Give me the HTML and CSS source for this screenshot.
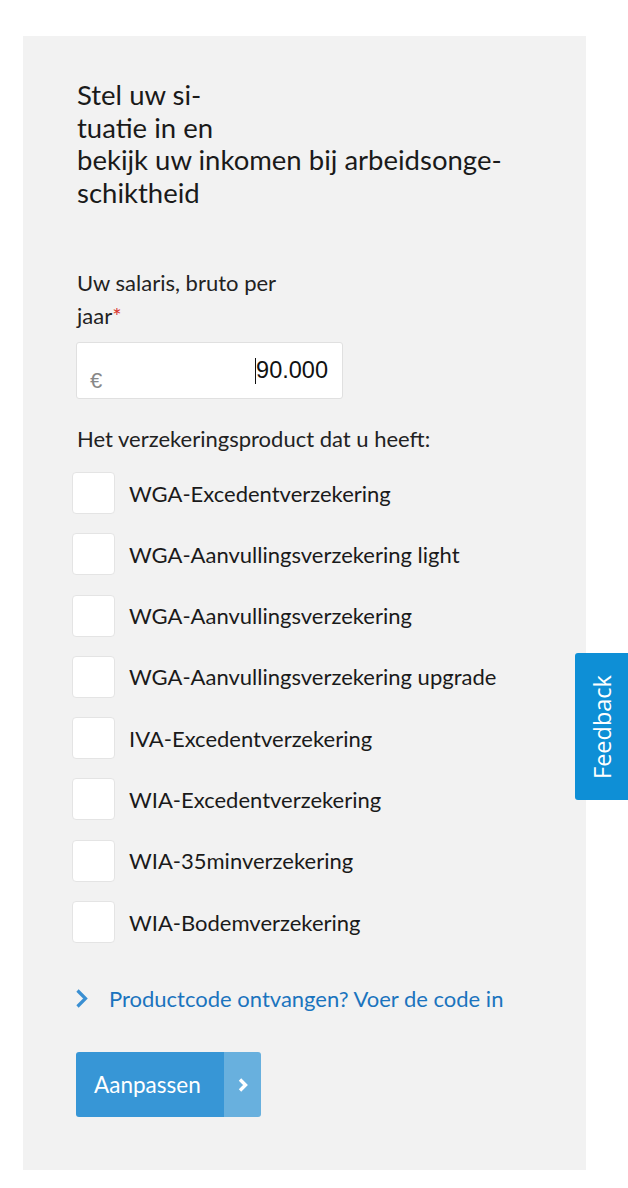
FILE: index.html
```html
<!DOCTYPE html>
<html lang="nl">
<head>
<meta charset="utf-8">
<title>Inkomen bij arbeidsongeschiktheid</title>
<link rel="stylesheet" href="styles.css">
</head>
<body>
<div class="panel">
  <h2 class="title">Stel uw si-<br>tuatie in en<br>bekijk uw inkomen bij arbeidsonge-<br>schiktheid</h2>

  <label class="label">Uw salaris, bruto per<br>jaar<span class="req">*</span></label>
  <div class="input">
    <span class="cur">€</span>
    <span class="val"><span class="caret"></span>90.000</span>
  </div>

  <p class="label prod">Het verzekeringsproduct dat u heeft:</p>
  <ul class="checks">
    <li class="check"><span class="box"></span><span>WGA-Excedentverzekering</span></li>
    <li class="check"><span class="box"></span><span>WGA-Aanvullingsverzekering light</span></li>
    <li class="check"><span class="box"></span><span>WGA-Aanvullingsverzekering</span></li>
    <li class="check"><span class="box"></span><span>WGA-Aanvullingsverzekering upgrade</span></li>
    <li class="check"><span class="box"></span><span>IVA-Excedentverzekering</span></li>
    <li class="check"><span class="box"></span><span>WIA-Excedentverzekering</span></li>
    <li class="check"><span class="box"></span><span>WIA-35minverzekering</span></li>
    <li class="check"><span class="box"></span><span>WIA-Bodemverzekering</span></li>
  </ul>

  <a class="link" href="#">
    <svg class="chev" width="12" height="19" viewBox="0 0 12 19"><path d="M1.5 1.5 L9.5 9.5 L1.5 17.5" fill="none" stroke="#3a8fd2" stroke-width="3.2"/></svg>
    <span>Productcode ontvangen? Voer de code in</span>
  </a>

  <button class="btn"><span class="btn-text">Aanpassen</span><span class="btn-arrow"><svg width="12" height="16" viewBox="0 0 12 16"><path d="M3 2.5 L8.5 8 L3 13.5" fill="none" stroke="#fff" stroke-width="3.4"/></svg></span></button>
</div>

<div class="feedback"><span>Feedback</span></div>
</body>
</html>
```

FILE: styles.css
```css
html, body { margin: 0; padding: 0; background: #fff; }
body {
  font-family: Lato, "Open Sans", sans-serif;
  color: #1a1a1a;
  width: 628px;
  height: 1188px;
  overflow: hidden;
  position: relative;
}
.panel {
  margin: 36px 0 0 23px;
  width: 563px;
  height: 1134px;
  box-sizing: border-box;
  background: #f2f2f2;
  padding: 43px 0 0 54px;
}
.title {
  margin: 0;
  font-size: 27.5px;
  font-weight: 400;
  line-height: 32.5px;
  color: #1a1a1a;
}
.label {
  display: block;
  margin: 57px 0 0 0;
  font-size: 22px;
  line-height: 33px;
  color: #222;
}
.req { color: #d9342b; }
.input {
  margin: 10px 0 0 -1px;
  width: 267px;
  height: 57px;
  box-sizing: border-box;
  background: #fff;
  border: 1px solid #e0e0e0;
  border-radius: 3px;
  display: flex;
  align-items: center;
  justify-content: space-between;
  padding: 0 14px 0 13px;
  font-family: "Liberation Sans", Arial, sans-serif;
}
.cur { color: #888; font-size: 22px; align-self: flex-end; margin-bottom: 4px; }
.val { font-size: 23.5px; color: #111; display: flex; align-items: center; }
.caret { display: inline-block; width: 1px; height: 26px; background: #111; }
.prod { margin-top: 23px; }
.checks {
  list-style: none;
  margin: 17px 0 0 -5px;
  padding: 0;
  display: flex;
  flex-direction: column;
  gap: 19.3px;
}
.check {
  display: flex;
  align-items: center;
  gap: 14px;
  font-size: 22px;
  color: #1a1a1a;
  height: 42px;
}
.box {
  width: 43px;
  height: 42px;
  box-sizing: border-box;
  background: #fff;
  border: 1px solid #e4e4e4;
  border-radius: 4px;
  flex: none;
}
.link {
  display: flex;
  align-items: center;
  gap: 21px;
  margin: 42px 0 0 -1px;
  color: #1b74be;
  text-decoration: none;
  font-size: 22px;
}
.chev { flex: none; }
.btn {
  margin: 40px 0 0 -1px;
  display: flex;
  padding: 0;
  border: 0;
  border-radius: 3px;
  overflow: hidden;
  height: 65px;
  font-family: inherit;
  cursor: pointer;
}
.btn-text {
  background: #3796d6;
  color: #fff;
  font-size: 22.5px;
  width: 148px;
  box-sizing: border-box;
  padding-left: 18px;
  display: flex;
  align-items: center;
}
.btn-arrow {
  background: #68b0de;
  width: 37px;
  display: flex;
  align-items: center;
  justify-content: center;
}
.feedback {
  position: absolute;
  left: 575px;
  top: 653px;
  width: 53px;
  height: 147px;
  background: #0e8fd6;
  border-radius: 3px 0 0 3px;
  display: flex;
  align-items: center;
  justify-content: center;
}
.feedback span {
  transform: rotate(-90deg);
  color: #fff;
  font-family: "Open Sans", sans-serif;
  font-size: 23.5px;
  white-space: nowrap;
}
```
